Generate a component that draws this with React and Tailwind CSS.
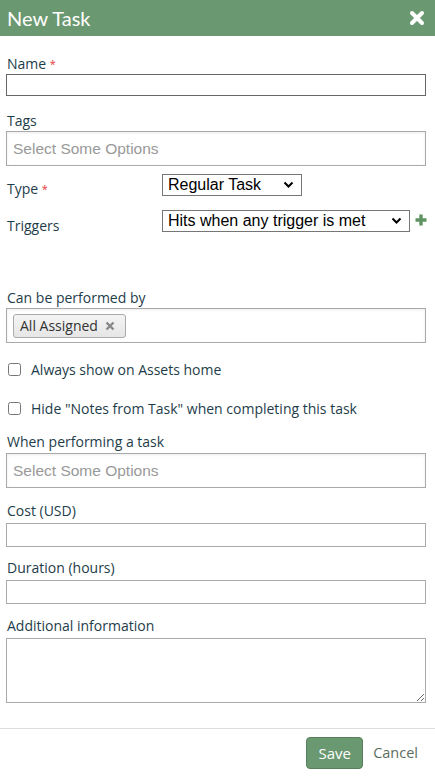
import { useState } from "react";

const labelCls = "block text-[14px] leading-[20px] text-[#1e3d4a]";
const boxCls = "w-full border border-[#aaa] bg-white";

function ChosenBox({ placeholder, children }) {
  return (
    <div
      className={`${boxCls} h-[35px] flex items-center px-[6px] shadow-[inset_0_1px_3px_rgba(0,0,0,0.08)]`}
      style={{ fontFamily: "'Liberation Sans', Arial, sans-serif" }}
    >
      {children || (
        <span className="text-[15.5px] text-[#999]">{placeholder}</span>
      )}
    </div>
  );
}

export default function App() {
  const [always, setAlways] = useState(false);
  const [hideNotes, setHideNotes] = useState(false);

  return (
    <div
      className="w-[435px] h-[777px] bg-white overflow-hidden"
      style={{ fontFamily: "'Open Sans', Lato, sans-serif" }}
    >
      <div
        className="h-[36px] bg-[#6a9870] flex items-center justify-between pl-[7px] pr-[10px]"
        style={{ fontFamily: "Lato, sans-serif" }}
      >
        <h1 className="text-white text-[20px] leading-none">New Task</h1>
        <svg width="16" height="16" viewBox="0 0 16 16">
          <path
            d="M3 3 L13 13 M13 3 L3 13"
            stroke="white"
            strokeWidth="4"
            strokeLinecap="round"
          />
        </svg>
      </div>

      <div className="pl-[6px] pr-[9px] pt-[18px]">
        <label className={`${labelCls} pl-[1px]`}>
          Name <span className="text-[#e53935] text-[11px] align-top">*</span>
        </label>
        <input className="w-full h-[22px] border border-[#666] block" />

        <label className={`${labelCls} mt-[15px] pl-[1px]`}>Tags</label>
        <ChosenBox placeholder="Select Some Options" />

        <div className="flex mt-[8px] h-[22px] overflow-visible">
          <label className={`${labelCls} w-[156px] pt-[5px] pl-[1px] shrink-0`}>
            Type <span className="text-[#e53935] text-[11px] align-top">*</span>
          </label>
          <div
            className="w-[140px] h-[22px] border border-[#767676] flex items-center justify-between pl-[5px] pr-[7px] text-[16px] text-black"
            style={{ fontFamily: "'Liberation Sans', Arial, sans-serif" }}
          >
            <span>Regular Task</span>
            <Chevron />
          </div>
        </div>

        <div className="flex mt-[14px] h-[22px] items-start overflow-visible">
          <label className={`${labelCls} w-[156px] pt-[6px] pl-[1px] shrink-0`}>
            Triggers
          </label>
          <div
            className="w-[248px] h-[22px] border border-[#767676] flex items-center justify-between pl-[5px] pr-[7px] text-[16px] text-black shrink-0"
            style={{ fontFamily: "'Liberation Sans', Arial, sans-serif" }}
          >
            <span>Hits when any trigger is met</span>
            <Chevron />
          </div>
          <svg width="12" height="12" viewBox="0 0 12 12" className="ml-[5px] mt-[4px] shrink-0">
            <path d="M6 0.5 V11.5 M0.5 6 H11.5" stroke="#5f9462" strokeWidth="3.4" />
          </svg>
        </div>

        <label className={`${labelCls} mt-[56px] pl-[1px]`}>
          Can be performed by
        </label>
        <ChosenBox>
          <span className="flex items-center h-[24px] pl-[6px] pr-[10px] border border-[#aaa] rounded-[3px] bg-[linear-gradient(#f4f4f4,#e6e6e6)] text-[14px] text-[#333]"
            style={{ fontFamily: "'Open Sans', sans-serif" }}
          >
            All Assigned
            <svg width="10" height="10" viewBox="0 0 10 10" className="ml-[7px]">
              <path d="M1.5 1.5 L8.5 8.5 M8.5 1.5 L1.5 8.5" stroke="#888" strokeWidth="2.4" />
            </svg>
          </span>
        </ChosenBox>

        <label className="flex items-center mt-[16px] h-[20px] text-[14px] text-[#1e3d4a]">
          <input
            type="checkbox"
            checked={always}
            onChange={(e) => setAlways(e.target.checked)}
            className="w-[13px] h-[13px] ml-[2px] mr-[10px]"
          />
          Always show on Assets home
        </label>

        <label className="flex items-center mt-[19px] h-[20px] text-[14px] text-[#1e3d4a]">
          <input
            type="checkbox"
            checked={hideNotes}
            onChange={(e) => setHideNotes(e.target.checked)}
            className="w-[13px] h-[13px] ml-[2px] mr-[10px]"
          />
          Hide "Notes from Task" when completing this task
        </label>

        <label className={`${labelCls} mt-[14px] pl-[1px]`}>
          When performing a task
        </label>
        <div className="mt-[1px]">
          <ChosenBox placeholder="Select Some Options" />
        </div>

        <label className={`${labelCls} mt-[13px] pl-[1px]`}>Cost (USD)</label>
        <input className={`${boxCls} block h-[24px] mt-[2px]`} />

        <label className={`${labelCls} mt-[11px] pl-[1px]`}>Duration (hours)</label>
        <input className={`${boxCls} block h-[24px] mt-[2px]`} />

        <label className={`${labelCls} mt-[12px] pl-[1px]`}>
          Additional information
        </label>
        <textarea className={`${boxCls} block h-[65px] mt-[2px] resize`} />
      </div>

      <div className="mt-[25px] border-t border-[#ddd] flex justify-end items-center pt-[8px] pr-[17px]">
        <button className="w-[57px] h-[32px] rounded-[4px] bg-[#6a9870] border border-[#55805b] text-white text-[15px]">
          Save
        </button>
        <span className="ml-[10px] text-[14.5px] text-[#5b6e60]">Cancel</span>
      </div>
    </div>
  );
}

function Chevron() {
  return (
    <svg width="11" height="8" viewBox="0 0 11 8">
      <path d="M1.5 1.5 L5.5 5.5 L9.5 1.5" fill="none" stroke="black" strokeWidth="2" />
    </svg>
  );
}
